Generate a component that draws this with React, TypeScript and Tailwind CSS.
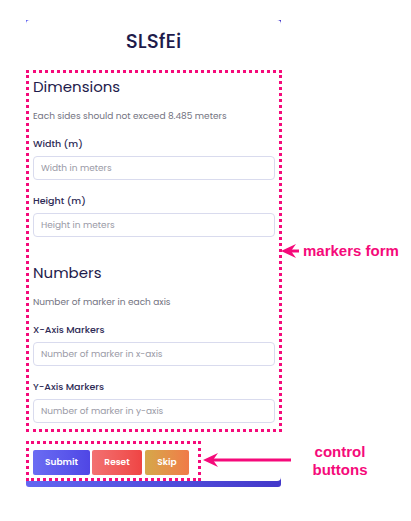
import React from 'react';

interface FieldProps {
  label: string;
  placeholder: string;
}

const Field: React.FC<FieldProps> = ({ label, placeholder }) => (
  <div className="mt-[14px]">
    <label className="block text-[9.5px] font-medium leading-[14px] text-[#2d2a55]">{label}</label>
    <input
      className="mt-[5px] block w-[242px] h-[24px] rounded-[4px] border border-[#d9dbee] px-[7px] text-[9px] text-[#374151] placeholder:text-[#9a9aa6] outline-none"
      placeholder={placeholder}
    />
  </div>
);

const Arrow: React.FC<{ length: number }> = ({ length }) => (
  <svg width={length} height="16" viewBox={`0 0 ${length} 16`} fill="none">
    <path d={`M5 8 H${length}`} stroke="#f50a7a" strokeWidth="3" />
    <path d="M0 8 L15 1 L10 8 L15 15 Z" fill="#f50a7a" />
  </svg>
);

export default function App() {
  return (
    <div className="relative w-[411px] h-[521px] bg-white font-['Poppins','Inter',sans-serif] overflow-hidden">
      <div className="ml-[26px] pt-[20px]">
        <div className="w-[255px] rounded-b-[3px] bg-gradient-to-r from-[#6366f1] to-[#4338ca] pb-[6px]">
          <div className="bg-white rounded-[4px]">
            <h1 className="pt-[8px] h-[50px] text-center text-[20px] font-medium leading-[26px] text-[#1e1b4b]">
              SLSfEi
            </h1>

            {/* markers form */}
            <div className="w-[256px] border-[3px] border-dotted border-[#f50a7a] px-[4px] pt-[4px] pb-[6px]">
              <h2 className="text-[15px] leading-[20px] text-[#1e1b4b]">Dimensions</h2>
              <p className="mt-[12px] text-[9px] leading-[14px] text-[#73737f]">
                Each sides should not exceed 8.485 meters
              </p>
              <Field label="Width (m)" placeholder="Width in meters" />
              <Field label="Height (m)" placeholder="Height in meters" />

              <h2 className="mt-[26px] text-[15px] leading-[20px] text-[#1e1b4b]">Numbers</h2>
              <p className="mt-[12px] text-[9px] leading-[14px] text-[#73737f]">
                Number of marker in each axis
              </p>
              <Field label="X-Axis Markers" placeholder="Number of marker in x-axis" />
              <Field label="Y-Axis Markers" placeholder="Number of marker in y-axis" />
            </div>

            {/* control buttons */}
            <div className="mt-[9px] w-[175px] border-[3px] border-dotted border-[#f50a7a] pl-[4px] pt-[6px] pb-[3px] flex gap-[2px]">
              <button className="w-[57px] h-[25px] rounded-[2px] bg-gradient-to-r from-[#6b6cf3] to-[#4f46e5] text-[9px] font-semibold text-white">
                Submit
              </button>
              <button className="w-[50px] h-[25px] rounded-[2px] bg-gradient-to-r from-[#f27171] to-[#ef4444] text-[9px] font-semibold text-white">
                Reset
              </button>
              <button className="ml-[1px] w-[44px] h-[25px] rounded-[2px] bg-gradient-to-r from-[#d4a84a] to-[#f07a48] text-[9px] font-semibold text-white">
                Skip
              </button>
            </div>
          </div>
        </div>
      </div>

      {/* annotations */}
      <div className="absolute left-[281px] top-[243px] flex items-center gap-[4px]">
        <Arrow length={18} />
        <span className="text-[15px] font-bold leading-[16px] text-[#f50a7a] font-['Liberation_Sans',sans-serif]">markers form</span>
      </div>
      <div className="absolute left-[203px] top-[452px]">
        <Arrow length={88} />
      </div>
      <div className="absolute left-[300px] top-[443px] w-[80px] text-center text-[15px] font-bold leading-[18px] text-[#f50a7a] font-['Liberation_Sans',sans-serif]">
        control
        <br />
        buttons
      </div>
    </div>
  );
}
